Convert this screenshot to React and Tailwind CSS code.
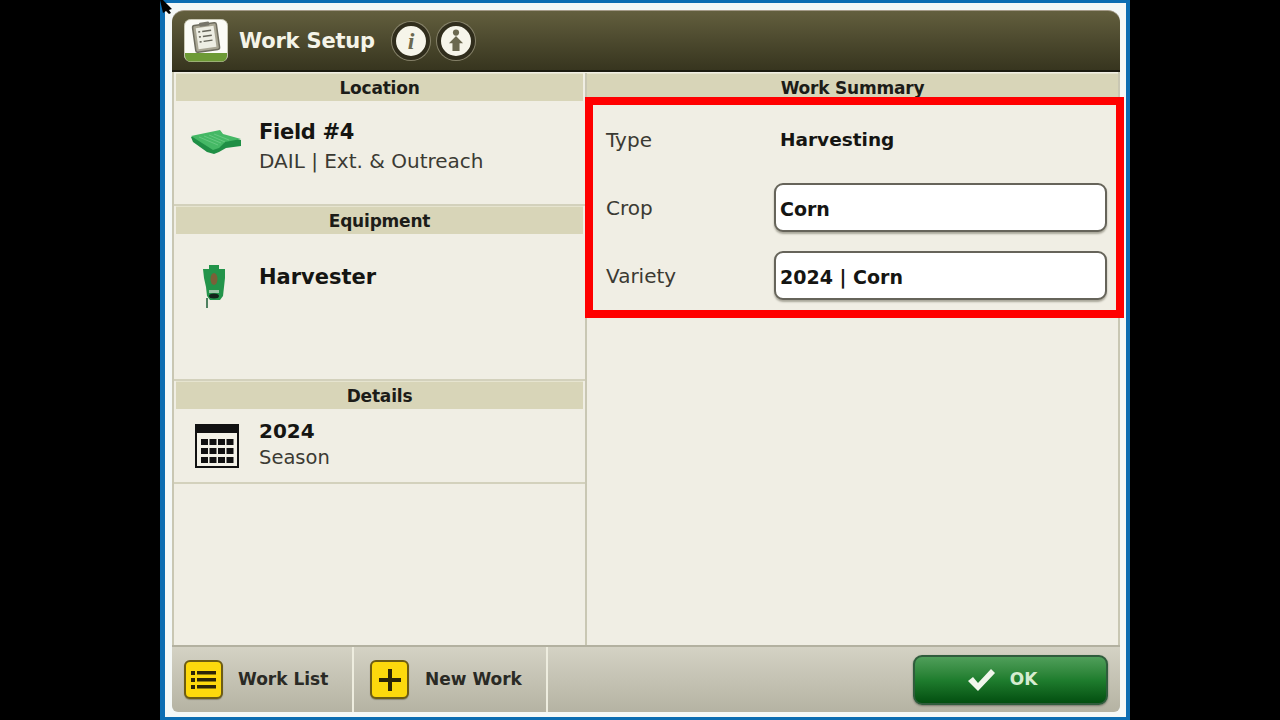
import React from 'react';

const SectionHeader = ({ title }) => (
  <div className="h-[28px] flex items-center justify-center pt-[2px] bg-[#d8d5b8] text-[17px] tracking-[-0.2px] leading-none font-bold text-[#1c1c18] shadow-[inset_0_1px_0_#e6e4cf]">
    {title}
  </div>
);

const WorkIcon = () => (
  <svg width="44" height="43" viewBox="0 0 44 43">
    <rect x="0.5" y="0.5" width="43" height="42" rx="6" fill="#fbfbf6" stroke="#c9c8b4" />
    <path d="M1 34h42v3a5.500 5.500 0 0 1-5.500 5.500h-31A5.500 5.500 0 0 1 1 37z" fill="#6d9a35" />
    <g transform="rotate(-8 22 18)">
      <rect x="10" y="5" width="24" height="27" rx="2" fill="#a9a694" stroke="#6e6c5e" strokeWidth="1.500" />
      <rect x="13" y="8" width="18" height="21" fill="#eeeee4" />
      <rect x="17" y="3" width="10" height="4" rx="1" fill="#77756a" />
      <path d="M15 12h2M19 12h9M15 17h2M19 17h9M15 22h2M19 22h9" stroke="#66655a" strokeWidth="1.500" />
    </g>
  </svg>
);

const RoundButton = ({ children }) => (
  <div className="w-[38px] h-[38px] rounded-full bg-[#f6f5ea] border-[4px] border-[#302d1c] shadow-[0_0_0_1px_#86826a] flex items-center justify-center">
    {children}
  </div>
);

const FieldIcon = () => (
  <svg width="52" height="26" viewBox="0 0 52 26">
    <path d="M1 8 30 2l3 4 18 5v6l-15 2-7 4-5 2-7-2L3 13z" fill="#1f8f45" />
    <path d="M1 7 30 1l3 4 18 5-16 3-6 6-6 2z" fill="#45b865" />
    <path d="M9 8l19 8M14 7l17 7M19 6l16 7M24 5l15 6" stroke="#6fcd88" strokeWidth="0.800" />
  </svg>
);

const HarvesterIcon = () => (
  <svg width="24" height="44" viewBox="0 0 24 44">
    <path d="M7 1h10v4h6v9l-1 9-1 9-3 4H8l-3-4-1-9-2-9-1-9h6z" fill="#23944a" />
    <ellipse cx="12" cy="15" rx="3.500" ry="6" fill="#7b6038" />
    <path d="M7 26h10v3H7z" fill="#9fc7a8" />
    <ellipse cx="12" cy="32" rx="5" ry="2.500" fill="#14241a" />
    <path d="M5 34v10" stroke="#4f8060" strokeWidth="2" />
  </svg>
);

const CalendarIcon = () => (
  <svg width="44" height="44" viewBox="0 0 44 44">
    <rect x="0" y="0" width="44" height="44" fill="#111" />
    <rect x="2" y="9" width="40" height="33" fill="#f4f2e8" />
    {[15, 24, 33].map((y) =>
      [6, 14.500, 23, 31.500].map((x) => <rect key={`${x}-${y}`} x={x} y={y} width="7" height="6" fill="#111" />)
    )}
  </svg>
);

const YellowButton = ({ children }) => (
  <div className="w-[39px] h-[39px] rounded-[6px] bg-[#fdd90d] border-2 border-[#6d5c14] shadow-[0_1px_1px_#8a8878] flex items-center justify-center">
    {children}
  </div>
);

const SummaryField = ({ value }) => (
  <div className="w-[333px] h-[49px] rounded-[9px] bg-white border-2 border-[#66645a] shadow-[0_2px_2px_#a9a79a] flex items-center pl-[4px] pt-[3px] text-[19px] font-bold text-[#151512]">
    {value}
  </div>
);

export default function App() {
  return (
    <div className="h-screen w-full bg-black relative overflow-hidden font-['DejaVu_Sans',sans-serif]">
      <div className="ml-[160px] w-[970px] h-full bg-[#f4f8f7] border-t-[3px] border-b-[3px] border-l-[5px] border-r-[4px] border-[#0c6db2] pt-[7px] pb-[5px] pl-[7px] pr-[6px]">
        <div className="h-full flex flex-col">
          <div className="h-[62px] shrink-0 flex items-center pl-[12px] rounded-t-[12px] bg-gradient-to-b from-[#635f3e] to-[#37351f] border-t border-[#a39a88] border-b-2 border-b-[#1b1a10]">
            <WorkIcon />
            <span className="ml-[11px] pt-[2px] text-[21px] tracking-[-0.2px] font-bold text-[#f5f4e8] w-[153px] whitespace-nowrap">Work Setup</span>
            <div className="flex gap-[7px]">
              <RoundButton>
                <span className="font-['Liberation_Serif',serif] italic font-bold text-[24px] leading-none text-[#6b6950]">i</span>
              </RoundButton>
              <RoundButton>
                <svg width="16" height="23" viewBox="0 0 18 26">
                  <circle cx="9" cy="4" r="3.500" fill="#6b6950" />
                  <path d="M9 8l8 8h-4v9H5v-9H1z" fill="#6b6950" />
                </svg>
              </RoundButton>
            </div>
          </div>

          <div className="flex-1 min-h-0 flex bg-[#f0eee4] border-l-2 border-r-2 border-[#c9c7b3] pt-px">
            <div className="w-[413px] shrink-0 border-r-2 border-[#c9c7b3] flex flex-col">
              <div className="h-[133px] border-b-2 border-[#d3d1bc]">
                <div className="ml-[2px] mr-[2px]">
                  <SectionHeader title="Location" />
                </div>
                <div className="flex pl-[16px] pt-[17px]">
                  <div className="pt-[11px] w-[69px]">
                    <FieldIcon />
                  </div>
                  <div>
                    <div className="text-[21px] tracking-[-0.3px] leading-[28px] font-bold text-[#151512]">Field #4</div>
                    <div className="text-[20px] leading-[30px] text-[#3b3a33]">DAIL | Ext. &amp; Outreach</div>
                  </div>
                </div>
              </div>
              <div className="h-[175px] border-b-2 border-[#d3d1bc]">
                <div className="ml-[2px] mr-[2px]">
                  <SectionHeader title="Equipment" />
                </div>
                <div className="flex pl-[28px] pt-[30px]">
                  <div className="w-[57px]">
                    <HarvesterIcon />
                  </div>
                  <div className="text-[21px] leading-[28px] font-bold text-[#151512] -mt-[1px]">Harvester</div>
                </div>
              </div>
              <div className="h-[103px] border-b-2 border-[#d3d1bc]">
                <div className="ml-[2px] mr-[2px]">
                  <SectionHeader title="Details" />
                </div>
                <div className="flex pl-[21px] pt-[8px]">
                  <div className="w-[64px] pt-[7px]">
                    <CalendarIcon />
                  </div>
                  <div>
                    <div className="text-[20px] leading-[28px] font-bold text-[#151512]">2024</div>
                    <div className="text-[19.500px] leading-[26px] text-[#3b3a33]">Season</div>
                  </div>
                </div>
              </div>
            </div>

            <div className="flex-1 min-w-0">
              <SectionHeader title="Work Summary" />
              <div className="pl-[19px] pt-[27px] flex flex-col">
                <div className="flex items-center h-[24px] mb-[31px]">
                  <span className="w-[174px] text-[20px] text-[#3b3a33]">Type</span>
                  <span className="text-[18.500px] font-bold text-[#151512]">Harvesting</span>
                </div>
                <div className="flex items-center mb-[19px]">
                  <span className="w-[168px] text-[20px] text-[#3b3a33]">Crop</span>
                  <SummaryField value="Corn" />
                </div>
                <div className="flex items-center">
                  <span className="w-[168px] text-[20px] text-[#3b3a33]">Variety</span>
                  <SummaryField value="2024 | Corn" />
                </div>
              </div>
            </div>
          </div>

          <div className="h-[67px] shrink-0 flex items-stretch rounded-b-[6px] bg-gradient-to-b from-[#d4d2c4] to-[#b5b3a3] border-t-2 border-[#b3b1a0]">
            <div className="w-[182px] flex items-center pl-[12px] border-r-2 border-[#eeeddf]">
              <YellowButton>
                <svg width="26" height="22" viewBox="0 0 26 22" fill="#2c2508">
                  <rect x="0" y="2" width="4" height="4" />
                  <rect x="6" y="2" width="19" height="3.500" />
                  <rect x="0" y="9" width="4" height="4" />
                  <rect x="6" y="9" width="19" height="3.500" />
                  <rect x="0" y="16" width="4" height="4" />
                  <rect x="6" y="16" width="19" height="3.500" />
                </svg>
              </YellowButton>
              <span className="ml-[15px] text-[17px] font-bold text-[#2a2a25] whitespace-nowrap">Work List</span>
            </div>
            <div className="w-[194px] flex items-center pl-[16px] border-r-2 border-[#eeeddf]">
              <YellowButton>
                <svg width="22" height="22" viewBox="0 0 22 22" fill="#2c2508">
                  <rect x="0" y="9" width="22" height="4" />
                  <rect x="9" y="0" width="4" height="22" />
                </svg>
              </YellowButton>
              <span className="ml-[16px] text-[17px] font-bold text-[#2a2a25] whitespace-nowrap">New Work</span>
            </div>
            <div className="flex-1 flex items-center justify-end pr-[12px]">
              <div className="w-[195px] h-[50px] rounded-[9px] border-2 border-[#2f5c3c] bg-gradient-to-b from-[#4f9f5a] via-[#1f7d2e] to-[#034f10] flex items-center justify-center gap-[14px] pr-[18px] shadow-[0_1px_2px_#77766a]">
                <svg width="30" height="24" viewBox="0 0 30 24">
                  <path d="M2 13l5-4 5 6L25 1l4 4L12 23z" fill="#f1f6ec" />
                </svg>
                <span className="text-[17px] font-bold text-[#d6ecd0]">OK</span>
              </div>
            </div>
          </div>
        </div>
      </div>

      {/* red highlight drawn on top of the screenshot */}
      <div className="absolute left-[585px] top-[97px] w-[539px] h-[221px] border-[8px] border-[#ff0000]" />
      {/* mouse pointer */}
      <svg className="absolute left-[160px] top-0" width="14" height="14" viewBox="0 0 14 14">
        <path d="M0 0h3l9 9-3 1 2 3-2 1-3-3-3 2z" fill="#000" />
      </svg>
    </div>
  );
}
